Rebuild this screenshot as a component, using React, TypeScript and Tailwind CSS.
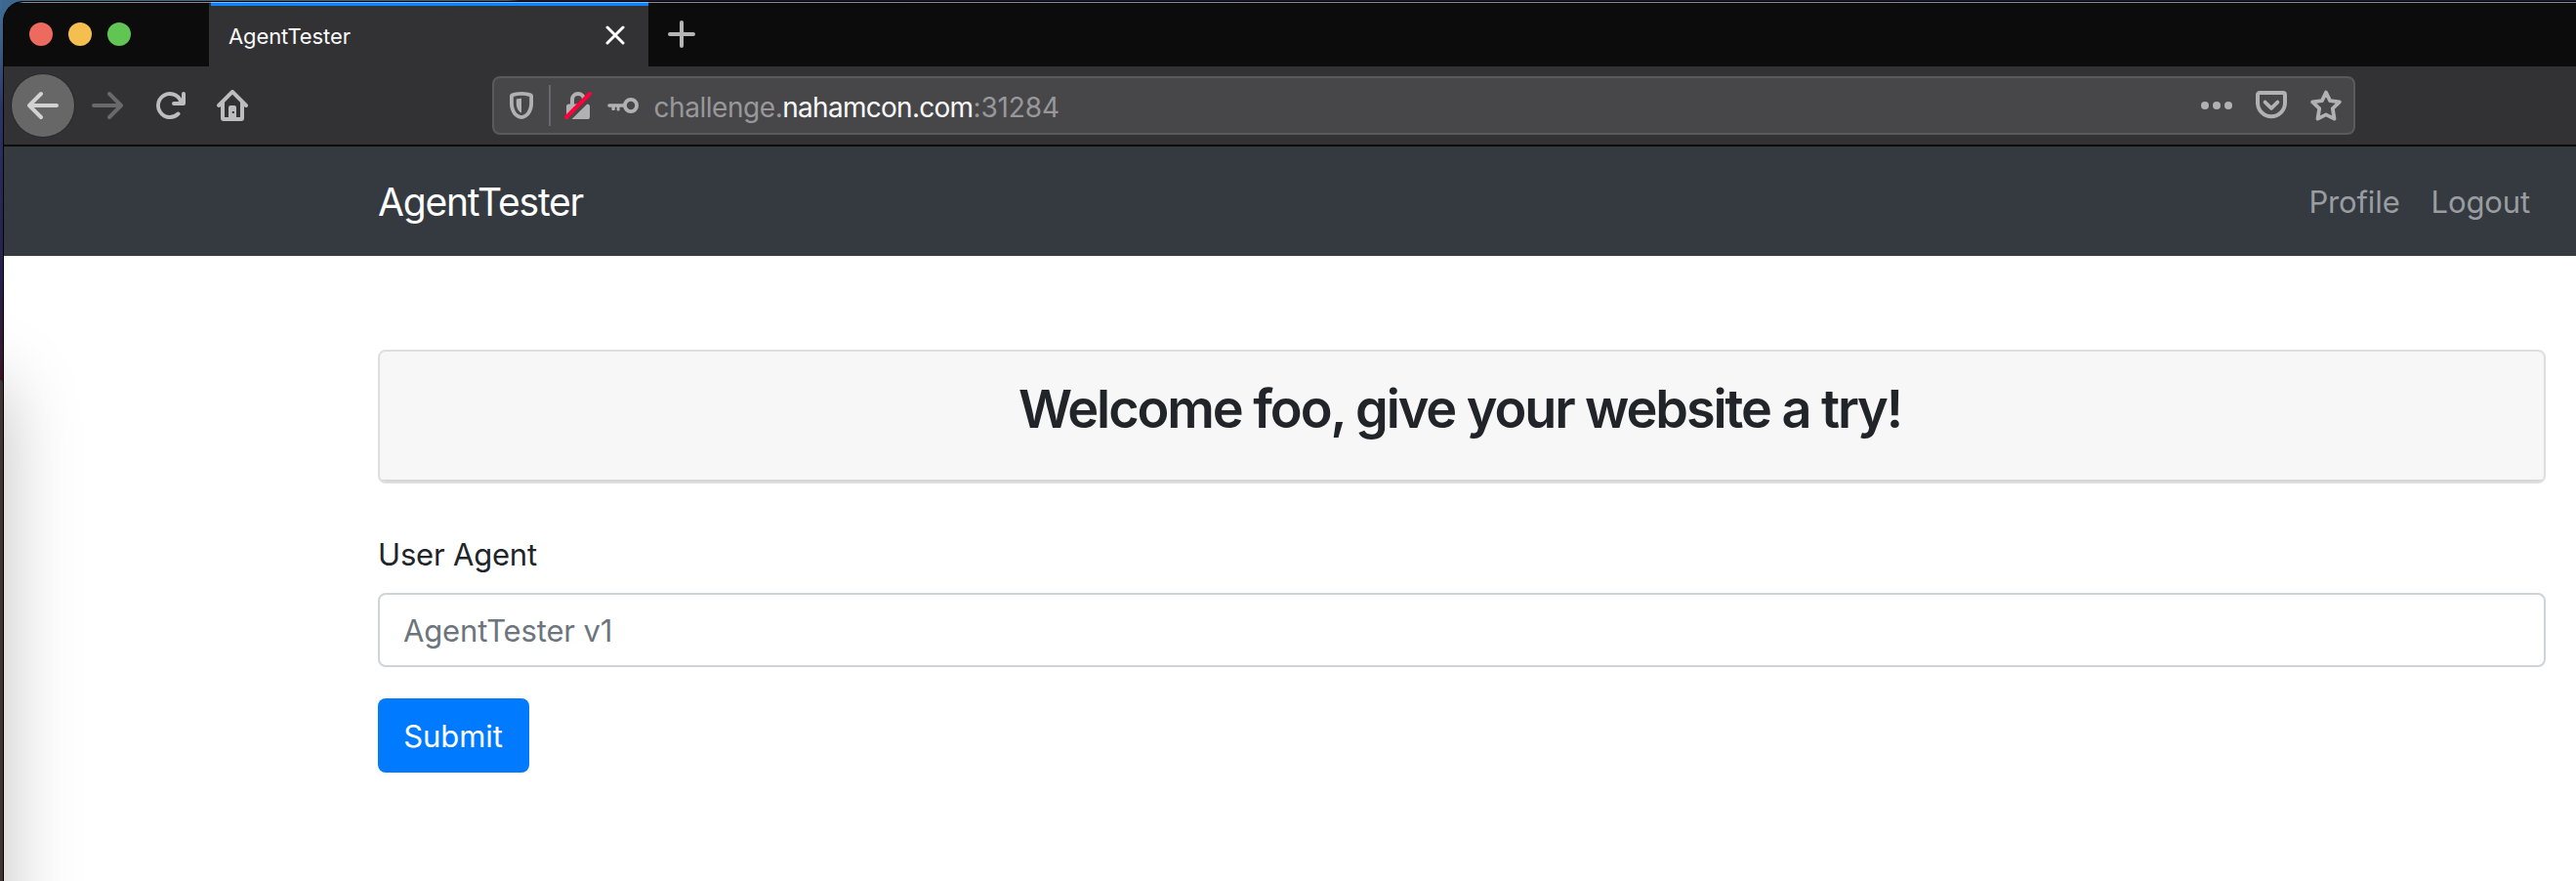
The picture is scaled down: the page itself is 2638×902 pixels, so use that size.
import type { ReactNode } from "react";

function Icon({ size = 32, className = "", children }: { size?: number; className?: string; children: ReactNode }) {
  return (
    <svg width={size} height={size} viewBox="0 0 16 16" fill="currentColor" className={`shrink-0 ${className}`}>
      {children}
    </svg>
  );
}

const BACK_PATH =
  "M15 7H3.414l4.293-4.293a1 1 0 0 0-1.414-1.414l-6 6a1 1 0 0 0 0 1.414l6 6a1 1 0 0 0 1.414-1.414L3.414 9H15a1 1 0 0 0 0-2z";

function TabBar() {
  return (
    <div className="flex h-[66px] shrink-0 bg-[#0c0c0d]">
      <div className="flex w-[210px] gap-4 border-t border-[#8a8a8a] pl-[26px] pt-5">
        <span className="size-6 rounded-full bg-[#ed6a5e]" />
        <span className="size-6 rounded-full bg-[#f5bf4f]" />
        <span className="size-6 rounded-full bg-[#61c554]" />
      </div>
      <div className="w-0.5 border-t border-[#8a8a8a] bg-[#323234]" />
      <div className="flex w-[448px] flex-col bg-[#323234]">
        <div className="h-px bg-[#7fb8ee]" />
        <div className="h-[3px] bg-[#0a84ff]" />
        <div className="flex flex-1 items-center justify-between pl-[18px] pr-6">
          <span className="text-[22px] leading-8 tracking-[-0.1px] text-[#f9f9fa]">AgentTester</span>
          <svg width="20" height="20" viewBox="0 0 20 20" className="mb-0.5" fill="none" stroke="#fff" strokeWidth="3" strokeLinecap="round">
            <path d="M2 2l16 16M18 2L2 18" />
          </svg>
        </div>
      </div>
      <div className="flex-1 border-t border-[#8a8a8a] pl-5 pt-[18px]">
        <svg width="28" height="28" viewBox="0 0 28 28" fill="none" stroke="#b5b5b6" strokeWidth="4" strokeLinecap="round">
          <path d="M2 14h24M14 2v24" />
        </svg>
      </div>
    </div>
  );
}

function UrlBar() {
  return (
    <div className="ml-[250px] flex h-[60px] w-[1908px] items-center rounded-[8px] border-2 border-[#5a5a5c] bg-[#474749] text-[#b1b1b3]">
      <Icon className="ml-3">
        <path
          fillRule="evenodd"
          d="M8 1c-2 0-4 .35-5.2.9A1.3 1.3 0 0 0 2 3.100V7c0 4.300 2.700 7.900 6 8 3.300-.1 6-3.700 6-8V3.100a1.300 1.300 0 0 0-.8-1.200C12 1.350 10 1 8 1zM8 2.900c1.500 0 3 .2 4.100.6V7c0 3.200-1.900 5.950-4.100 6.100C5.800 12.950 3.900 10.200 3.900 7V3.500C5 3.100 6.500 2.900 8 2.900z"
        />
        <path d="M8 4.400c-1 .05-1.900.2-2.600.4V7c0 2.300 1.100 4.200 2.600 4.700z" />
      </Icon>
      <div className="ml-3 h-[42px] w-0.5 bg-[#65666f]" />
      <Icon className="ml-3">
        <path d="M3.300 7.200h.7V5a4 4 0 0 1 8 0v2.200h.7A1.300 1.300 0 0 1 14 8.500v5.200a1.300 1.300 0 0 1-1.300 1.300H3.300A1.300 1.300 0 0 1 2 13.700V8.500a1.300 1.300 0 0 1 1.300-1.300zM6 7.200h4V5a2 2 0 0 0-4 0z" fillRule="evenodd" />
        <path d="M3.200 15.200L15.300 3.100" stroke="#474749" strokeWidth="2" />
        <path d="M2 14L14 2" stroke="#ff0039" strokeWidth="2" strokeLinecap="round" />
      </Icon>
      <Icon className="ml-3.5">
        <circle cx="12" cy="8" r="3.050" fill="none" stroke="currentColor" strokeWidth="1.900" />
        <path d="M9.200 7.100v1.800H6.300v1.300a.5.5 0 0 1-.5.5h-.5a.5.5 0 0 1-.5-.5V8.900h-.9v1.100a.5.5 0 0 1-.5.5h-.7a.5.5 0 0 1-.5-.5V8.900H1a.9.9 0 0 1 0-1.800z" />
      </Icon>
      <div className="ml-[15.5px] flex-1 whitespace-nowrap pt-[3px] text-[28px] leading-9 text-[#98989a]">
        <span className="tracking-[-0.45px]">challenge.</span>
        <span className="tracking-[-0.72px] text-[#f9f9fa]">nahamcon.com</span>
        <span className="tracking-[-0.1px]">:31284</span>
      </div>
      <Icon>
        <circle cx="2" cy="8" r="2" />
        <circle cx="8" cy="8" r="2" />
        <circle cx="14" cy="8" r="2" />
      </Icon>
      <Icon className="ml-6">
        <path
          d="M2 1.900h12a1 1 0 0 1 1 1V7a7 7 0 0 1-14 0V2.900a1 1 0 0 1 1-1z"
          transform="translate(0 -.4)"
          fill="none"
          stroke="currentColor"
          strokeWidth="2"
        />
        <path d="M4.800 6.300L8 9.400l3.200-3.100" fill="none" stroke="currentColor" strokeWidth="1.900" strokeLinecap="round" strokeLinejoin="round" />
      </Icon>
      <Icon className="ml-6 mr-3">
        <path
          d="M8 1.300l2.050 4.250 4.850.65-3.500 3.350.85 5.250L8 12.700l-4.250 2.100.85-5.250L1.100 6.200l4.850-.65z"
          fill="none"
          stroke="currentColor"
          strokeWidth="1.900"
          strokeLinejoin="round"
        />
      </Icon>
    </div>
  );
}

function Toolbar() {
  return (
    <div className="flex h-[82px] shrink-0 items-center border-b-2 border-[#0c0c0d] bg-[#323234] pl-[7px] text-[#bdbdbe]">
      <div className="flex size-[66px] items-center justify-center rounded-full border border-[#272728] bg-[#676767] text-[#d2d2d3]">
        <Icon>
          <path d={BACK_PATH} />
        </Icon>
      </div>
      <Icon className="ml-[17px] -scale-x-100 text-[#69696b]">
        <path d={BACK_PATH} />
      </Icon>
      <Icon className="ml-8">
        <path d="M15 1a1 1 0 0 0-1 1v2.418A6.995 6.995 0 1 0 8 15a6.954 6.954 0 0 0 4.950-2.050 1 1 0 0 0-1.414-1.414A5.019 5.019 0 1 1 12.549 6H10a1 1 0 0 0 0 2h5a1 1 0 0 0 1-1V2a1 1 0 0 0-1-1z" />
      </Icon>
      <Icon className="ml-8">
        <path
          fillRule="evenodd"
          d="M8.707.293a1 1 0 0 0-1.414 0l-7 7A1 1 0 0 0 1.700 8.707L2 8.414V14.500A1.500 1.500 0 0 0 3.500 16h9a1.500 1.500 0 0 0 1.500-1.500V8.414l.293.293a1 1 0 0 0 1.414-1.414zM4 6.414l4-4 4 4V14h-2V9a1 1 0 0 0-1-1H7a1 1 0 0 0-1 1v5H4zM7.900 11h1v1h-1z"
        />
      </Icon>
      <UrlBar />
    </div>
  );
}

function Navbar() {
  return (
    <nav className="flex h-28 shrink-0 items-center justify-between bg-[#343a40] pl-[383px] pr-[47px] pt-px">
      <a className="text-[39px] leading-[60px] tracking-[-1.2px] text-white">AgentTester</a>
      <div className="flex gap-8 text-[31px] leading-[48px] tracking-[-0.13px] text-[#9a9da0]">
        <a>Profile</a>
        <a>Logout</a>
      </div>
    </nav>
  );
}

function Page() {
  return (
    <main className="relative flex-1 overflow-hidden bg-white pl-[383px] pr-[31px] pt-24 text-[#212529]">
      <div className="pointer-events-none absolute -left-[400px] top-[134px] h-[1000px] w-[400px] shadow-[0_0_72px_0_rgba(0,0,0,0.25)]" />
      <section className="h-[137px] overflow-hidden rounded-[8px] border-2 border-[#dedede] bg-[#f7f7f7]">
        <h2 className="h-full border-b-2 border-[#d7d7d7] pr-1 pt-[26px] text-center text-[54px] font-semibold leading-[66px] tracking-[-2.08px]">
          Welcome foo, give your website a try!
        </h2>
      </section>
      <form className="pt-[49px]">
        <label className="block text-[31px] leading-[48px] tracking-[-0.19px]">User Agent</label>
        <div className="mt-[15px] flex h-[76px] items-center rounded-[8px] border-2 border-[#ced4da] bg-white px-6 pt-px text-[31px] leading-[48px] tracking-[-0.15px] text-[#6c757d]">
          AgentTester v1
        </div>
        <button type="button" className="mt-8 flex h-[76px] w-[155px] items-center justify-center rounded-[8px] bg-[#007bff] pr-px pt-px text-[31px] leading-[48px] tracking-[-0.07px] text-white">
          Submit
        </button>
      </form>
    </main>
  );
}

export default function App() {
  return (
    <div className="flex h-[902px] w-[2638px] overflow-hidden bg-[linear-gradient(90deg,#3d6f8e_0,#38607f_520px,#16183a_532px,#1b1b40_100%)] font-[Inter,sans-serif]">
      <div className="flex w-[3px] shrink-0 flex-col bg-[linear-gradient(180deg,#3f6d94_0,#3a6189_40px,#2b3566_110px,#262a5a_180px,#25204d_290px,#3a1730_370px,#40101f_388px)]">
        <div className="mt-[389px] flex-1 rounded-tr-[3px] bg-[#3f3535]" />
      </div>
      <div className="-ml-px flex flex-1 bg-[radial-gradient(circle_at_0_0,#3d6790_0,#3d6790_20px,transparent_21px)]">
        <div className="ml-px mt-px flex flex-1 flex-col overflow-hidden rounded-tl-[21px] border-l border-t border-black bg-black">
          <div className="flex flex-1 flex-col overflow-hidden rounded-tl-[20px]">
            <TabBar />
            <Toolbar />
            <Navbar />
            <Page />
          </div>
        </div>
      </div>
    </div>
  );
}
